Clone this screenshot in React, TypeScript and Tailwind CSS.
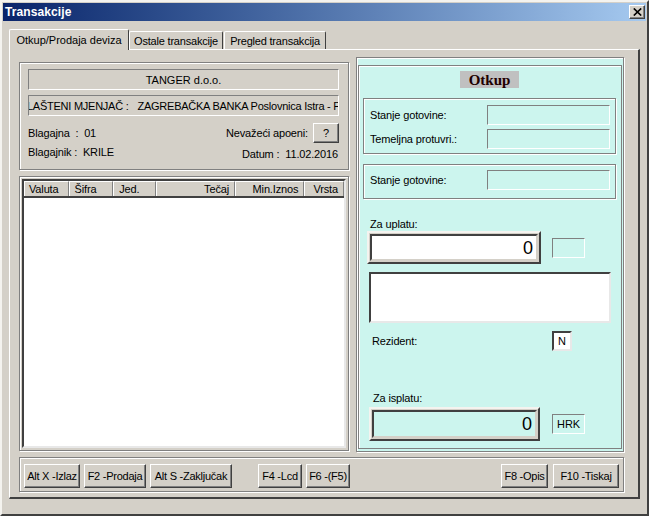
// App.tsx
import React from 'react';

const etched = 'border border-[#808080] shadow-[1px_1px_0_#fff,inset_1px_1px_0_#fff]';
const sunken = 'border border-t-[#808080] border-l-[#808080] border-r-white border-b-white';
const raised = 'border border-t-white border-l-white border-r-[#404040] border-b-[#404040] shadow-[inset_-1px_-1px_0_#808080]';
const bigFrame = 'border-2 border-t-[#f4f3ef] border-l-[#f4f3ef] border-r-[#404040] border-b-[#404040]';

function Button({ label, width, className = '' }: { label: string; width: string; className?: string }) {
  return (
    <div className={`${raised} ${width} ${className} h-[24px] flex items-center justify-center whitespace-nowrap tracking-[-0.25px]`}>
      {label}
    </div>
  );
}

function Tab({ label, width, active = false }: { label: string; width: string; active?: boolean }) {
  if (active) {
    return (
      <div className={`${width} h-[21px] -mb-px z-10 bg-[#d4d0c8] border border-b-0 border-t-white border-l-white border-r-[#404040] rounded-t-[2px] flex justify-center pt-[3px] whitespace-nowrap tracking-normal`}>
        {label}
      </div>
    );
  }
  return (
    <div className={`${width} h-[18px] mt-[3px] border border-b-0 border-t-white border-l-white border-r-[#404040] rounded-t-[2px] flex justify-center pt-[2px] whitespace-nowrap tracking-[-0.2px]`}>
      {label}
    </div>
  );
}

const columns = [
  { label: 'Valuta', width: 'w-[45px]', align: 'pl-[4px]' },
  { label: 'Šifra', width: 'w-[45px]', align: 'pl-[5px]' },
  { label: 'Jed.', width: 'w-[43px]', align: 'pl-[5px]' },
  { label: 'Tečaj', width: 'w-[80px]', align: 'justify-end pr-[5px]' },
  { label: 'Min.Iznos', width: 'w-[70px]', align: 'justify-end pr-[5px]' },
  { label: 'Vrsta', width: 'w-[40px]', align: 'justify-end pr-[5px]' },
];

export default function App() {
  return (
    <div className="w-[649px] h-[516px] bg-[#d4d0c8] text-[11px] tracking-[-0.15px] leading-[14px] text-black overflow-hidden border-b-2 border-r-2 border-b-[#404040] border-r-[#404040] border-t-2 border-l-2 border-t-[#f4f3ef] border-l-[#f4f3ef] font-['Liberation_Sans',Arial,sans-serif]">
      {/* Title bar */}
      <div className="ml-px mr-px mt-px h-[18px] flex items-center justify-between pl-[2px] pr-px bg-gradient-to-r from-[#0a246a] to-[#a6caf0]">
        <span className="font-bold text-[12px] tracking-[0.1px] text-white">Transakcije</span>
        <div className={`${raised} w-[16px] h-[14px] bg-[#d4d0c8] flex items-center justify-center`}>
          <svg width="9" height="8" viewBox="0 0 9 8">
            <path d="M0.8 0.5L8.2 7.5M8.2 0.5L0.8 7.5" stroke="#000" strokeWidth="1.7" fill="none" />
          </svg>
        </div>
      </div>

      {/* Tabs */}
      <div className="ml-[7px] mt-[8px] w-[631px]">
        <div className="flex h-[20px] items-end">
          <Tab label="Otkup/Prodaja deviza" width="w-[120px]" active />
          <Tab label="Ostale transakcije" width="w-[94px]" />
          <div className="ml-px">
            <Tab label="Pregled transakcija" width="w-[102px]" />
          </div>
        </div>

        {/* Tab page */}
        <div className="h-[450px] border-2 border-t-white border-l-white border-r-[#404040] border-b-[#404040] border-t border-l pl-[9px] pt-[7px]">
          <div className="flex gap-[7px]">
            {/* Left column */}
            <div className="w-[330px] mt-[5px]">
              <div className={`${etched} h-[108px] pt-[6px] px-[8px]`}>
                <div className={`${sunken} w-[311px] h-[21px] flex items-center justify-center tracking-normal`}>TANGER d.o.o.</div>
                <div className={`${sunken} w-[311px] h-[21px] mt-[5px] flex items-center overflow-hidden whitespace-nowrap`}>
                  <span className="-ml-[2px] tracking-[-0.25px]">
                    LAŠTENI MJENJAČ :<span className="ml-[9px]">ZAGREBAČKA BANKA Poslovnica Istra - Poreč</span>
                  </span>
                </div>
                <div className="flex justify-between mt-[7px] w-[311px]">
                  <div className="pt-[3px]">
                    <div>Blagajna&nbsp;&nbsp;:&nbsp;&nbsp;01</div>
                    <div className="mt-[5px]">Blagajnik :&nbsp;&nbsp;KRILE</div>
                  </div>
                  <div className="flex flex-col items-end">
                    <div className="flex items-center gap-[5px]">
                      <span>Nevažeći apoeni:</span>
                      <Button label="?" width="w-[26px]" className="!h-[20px]" />
                    </div>
                    <div className="mt-[4px] mr-px">Datum :&nbsp;&nbsp;11.02.2016</div>
                  </div>
                </div>
              </div>

              {/* Grid */}
              <div className={`${etched} mt-[6px] h-[275px] p-[2px]`}>
                <div className="h-full border-2 border-t-[#404040] border-l-[#404040] border-r-[#e8e8e8] border-b-[#e8e8e8] bg-white flex flex-col">
                  <div className="flex h-[17px] bg-[#d4d0c8] border-b-2 border-b-[#404040]">
                    {columns.map((c) => (
                      <div key={c.label} className={`${c.width} ${c.align} flex items-center border-t border-l border-t-white border-l-white border-r border-r-[#808080]`}>
                        {c.label}
                      </div>
                    ))}
                  </div>
                </div>
              </div>
            </div>

            {/* Right column */}
            <div className={`${etched} w-[268px] h-[395px] p-px bg-[#ccf5ee]`}>
              <div className="mt-[6px] h-[384px] border border-[#808080] shadow-[inset_1px_1px_0_#fff] pl-[4px] pr-[5px] pt-[5px]">
                <div className="flex justify-center">
                  <div className="w-[59px] h-[17px] bg-[#c0c0c0] flex items-center justify-center font-['Liberation_Serif',serif] font-bold text-[15px] tracking-normal text-[#200000]">Otkup</div>
                </div>
                <div className={`${etched} mt-[10px] h-[56px] pl-[6px] pr-[5px] pt-[6px]`}>
                  <div className="flex items-center justify-between h-[20px]">
                    <span>Stanje gotovine:</span>
                    <div className={`${sunken} w-[123px] h-[20px]`} />
                  </div>
                  <div className="flex items-center justify-between h-[20px] mt-[4px]">
                    <span>Temeljna protuvri.:</span>
                    <div className={`${sunken} w-[123px] h-[20px]`} />
                  </div>
                </div>
                <div className={`${etched} mt-[10px] h-[35px] pl-[6px] pr-[5px] pt-[5px]`}>
                  <div className="flex items-center justify-between h-[20px]">
                    <span>Stanje gotovine:</span>
                    <div className={`${sunken} w-[123px] h-[20px]`} />
                  </div>
                </div>

                <div className="mt-[18px] pl-[7px] h-[14px]">Za uplatu:</div>
                <div className="flex items-center pl-[4px]">
                  <div className={`${bigFrame} w-[174px] h-[33px] bg-[#d4d0c8] p-px`}>
                    <div className="h-full border-2 border-t-[#404040] border-l-[#404040] border-r-[#d4d0c8] border-b-[#d4d0c8] bg-white flex items-center justify-end pr-[3px] pt-px text-[18px] tracking-normal">0</div>
                  </div>
                  <div className={`${sunken} ml-[11px] w-[33px] h-[20px]`} />
                </div>
                <div className="ml-[6px] mt-[8px] w-[242px] h-[51px] bg-white border-2 border-t-[#404040] border-l-[#404040] border-r-[#e8e8e8] border-b-[#e8e8e8]" />
                <div className="flex mt-[8px] items-center">
                  <span className="pl-[9px] w-[189px]">Rezident:</span>
                  <div className="w-[20px] h-[20px] bg-white border-2 border-t-[#404040] border-l-[#404040] border-r-[#e8e8e8] border-b-[#e8e8e8] flex items-center justify-center">N</div>
                </div>
                <div className="mt-[40px] pl-[10px] h-[14px]">Za isplatu:</div>
                <div className="flex items-center pl-[6px] mt-[2px]">
                  <div className={`${bigFrame} w-[171px] h-[34px] bg-[#d4d0c8] p-px`}>
                    <div className="h-full border-2 border-t-[#404040] border-l-[#404040] border-r-[#d4d0c8] border-b-[#d4d0c8] bg-[#ccf5ee] flex items-center justify-end pr-[3px] text-[18px] tracking-normal">0</div>
                  </div>
                  <div className={`${sunken} ml-[12px] w-[33px] h-[20px] flex items-center justify-center`}>HRK</div>
                </div>
              </div>
            </div>
          </div>

          {/* Button bar */}
          <div className={`${etched} mt-[5px] w-[605px] h-[35px] pt-[6px] pl-[4px] pr-[4px] flex`}>
            <Button label="Alt X -Izlaz" width="w-[56px]" />
            <Button label="F2 -Prodaja" width="w-[62px]" className="ml-[4px]" />
            <Button label="Alt S -Zaključak" width="w-[82px]" className="ml-[4px]" />
            <Button label="F4 -Lcd" width="w-[44px]" className="ml-[26px]" />
            <Button label="F6 -(F5)" width="w-[44px]" className="ml-[4px]" />
            <Button label="F8 -Opis" width="w-[47px]" className="ml-auto" />
            <Button label="F10 -Tiskaj" width="w-[66px]" className="ml-[5px]" />
          </div>
        </div>
      </div>
    </div>
  );
}
